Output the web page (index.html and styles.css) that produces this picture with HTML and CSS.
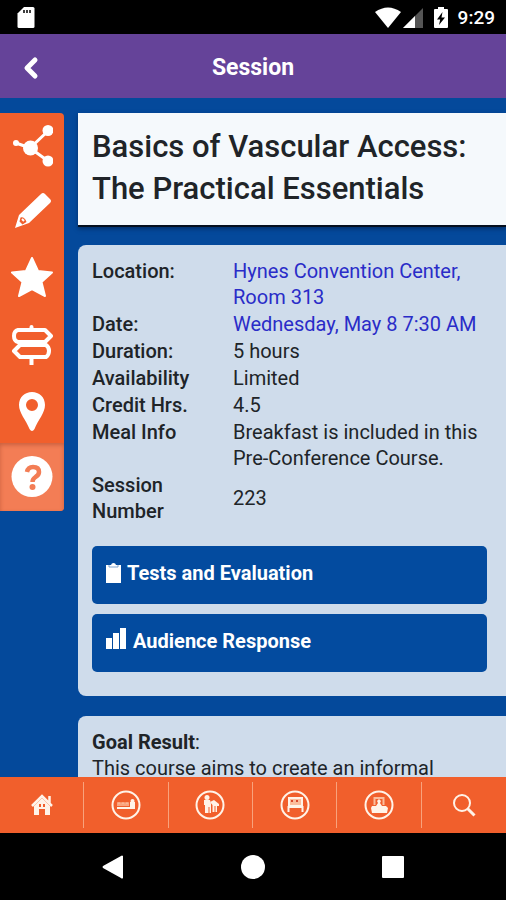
FILE: index.html
```html
<!DOCTYPE html>
<html lang="en">
<head>
<meta charset="utf-8">
<meta name="viewport" content="width=device-width, initial-scale=1">
<title>Session</title>
<link rel="stylesheet" href="styles.css">
</head>
<body>
<div class="status">
  <svg class="sd" viewBox="0 0 18 22" width="18" height="22"><path fill="#fff" d="M7 0h9q1.500 0 1.500 1.500v18q0 1.500-1.500 1.500H2q-1.500 0-1.500-1.500V6.500z"/><path d="M7 3v3M10 3v3M13 3v3" stroke="#000" stroke-width="1.500"/></svg>
  <svg viewBox="0 0 26 22" width="26" height="22"><path fill="#fff" d="M0 5Q13-4 26 5L13 21z"/></svg>
  <svg class="signal" viewBox="0 0 22 22" width="22" height="22"><path fill="#555" d="M21 1v20H1z"/><path fill="#fff" d="M13 9v12H1z"/></svg>
  <svg class="battery" viewBox="0 0 14 22" width="14" height="22"><path fill="#fff" d="M4 0h6v2h3q1 0 1 1v17q0 1-1 1H1q-1 0-1-1V3q0-1 1-1h3z"/><path d="M8.500 5L3 12.500h3.200L5 18l6-7.500H7.500z"/></svg>
  <span>9:29</span>
</div>
<header class="header">
  <button class="back" aria-label="Back"><svg viewBox="0 0 18 26" width="18" height="26"><path d="M13 5L5 13l8 8" fill="none" stroke="#fff" stroke-width="5" stroke-linecap="round" stroke-linejoin="round"/></svg></button>
  <h1>Session</h1>
</header>
<div class="body">
  <nav class="side" aria-label="Session actions">
    <button aria-label="Share"><svg viewBox="0 0 42 42" width="42" height="42" fill="#fff" stroke="#fff"><path d="M5 18l14 5L37 6M19 23l18 13" fill="none" stroke-width="3"/><g stroke="none"><circle cx="5" cy="18" r="3"/><circle cx="19.500" cy="23" r="7.500"/><circle cx="37" cy="5.500" r="5.500"/><circle cx="37" cy="36" r="5.500"/></g></svg></button>
    <button aria-label="Edit"><svg viewBox="0 0 42 42" width="42" height="42"><path fill="#fff" d="M30 3q2-2 4 0l5 5q2 2 0 4L18 32 4 37 8 24z"/><path d="M9.500 26.500q4-1 6 4.500l-4 2.500-3-3z" fill="#f15f2c"/><path d="M11 28l2 2" stroke="#fff" stroke-width="2"/></svg></button>
    <button aria-label="Favorite"><svg viewBox="0 0 42 42" width="42" height="42"><path fill="#fff" stroke="#fff" stroke-width="2" stroke-linejoin="round" d="M21 1l6 13 14 1.500-10.500 9.500 3.500 14-13-7-13 7 3.500-14L1 15.500 15 14z"/></svg></button>
    <button aria-label="Directions"><svg viewBox="0 0 42 42" width="42" height="42" fill="none" stroke="#fff" stroke-width="4" stroke-linejoin="round" stroke-linecap="round"><path d="M20.500 4v2M20.500 35v8M7 7h27l6 6-6 6H7q-4-1-4-6t4-6zM9 22h26q3 2 3 6t-3 6H9l-6-6z"/></svg></button>
    <button aria-label="Map"><svg viewBox="0 0 42 42" width="42" height="42"><path fill="#fff" fill-rule="evenodd" d="M21 3c-7 0-13 5-13 13 0 8 7 15 10.500 24q2.500 4 5 0C27 31 34 24 34 16 34 8 28 3 21 3zm0 7a6 6 0 1 1 0 12 6 6 0 0 1 0-12z"/></svg></button>
    <button class="active" aria-label="Help"><svg viewBox="0 0 42 42" width="42" height="42"><circle cx="21" cy="20.500" r="20.500" fill="#fff"/><path d="M16 16q1-5 6-5 6 0 6 5 0 3-3.500 5-3 2-3 5" fill="none" stroke="#f37d55" stroke-width="4.500"/><circle cx="21.500" cy="31" r="3" fill="#f37d55"/></svg></button>
  </nav>
  <main class="content">
    <h2>Basics of Vascular Access: The Practical Essentials</h2>
    <section class="card">
      <table>
        <tr><th scope="row">Location:</th><td><a href="#location">Hynes Convention Center, Room 313</a></td></tr>
        <tr><th scope="row">Date:</th><td><a href="#date">Wednesday, May 8 7:30 AM</a></td></tr>
        <tr><th scope="row">Duration:</th><td>5 hours</td></tr>
        <tr><th scope="row">Availability</th><td>Limited</td></tr>
        <tr><th scope="row">Credit Hrs.</th><td>4.5</td></tr>
        <tr><th scope="row">Meal Info</th><td>Breakfast is included in this Pre-Conference Course.</td></tr>
        <tr><th scope="row">Session Number</th><td class="middle">223</td></tr>
      </table>
      <div class="actions">
        <button><svg viewBox="0 0 15 20" width="15" height="20"><path fill="#fff" d="M0 2h15v18H0zM5 2q.5-2 2.500-2T10 2z"/><path d="M3 2v2h9V2" fill="none" stroke="#7ea3cf"/></svg>Tests and Evaluation</button>
        <button><svg class="chart" viewBox="0 0 21 21" width="21" height="21"><path fill="#fff" d="M0 10h6v11H0zM7 5h6v16H7zM14 0h6v21h-6z"/></svg>Audience Response</button>
      </div>
    </section>
    <section class="card">
      <p><b>Goal Result</b>:</p>
      <p>This course aims to create an informal</p>
    </section>
  </main>
</div>
<nav class="tabs" aria-label="Main">
  <a href="#home" aria-label="Home"><svg viewBox="0 0 30 30" width="30" height="30"><path d="M5 16L15 6l10 10M22.500 6v7" fill="none" stroke="#fff3e8" stroke-width="2.500"/><path fill="#fff3e8" fill-rule="evenodd" d="M7 16l8-8 8 8v9h-5v-6h-6v6H7zm5-2v3h2v-3zm4 0v3h2v-3z"/></svg></a>
  <a href="#speakers" aria-label="Speakers"><svg viewBox="0 0 30 30" width="30" height="30"><circle cx="15" cy="15" r="13.500" class="ring"/><path fill="#fff3e8" d="M6 17h18v2H6zM19 12h5v5h-5z"/><circle cx="21.500" cy="11" r="2" fill="#fff3e8"/><path d="M7 16v-3h2v3m2 0v-3h2v3m2 0v-3h2v3" fill="none" stroke="#fbbd9c" stroke-width="1.500"/></svg></a>
  <a href="#sessions" aria-label="Sessions"><svg viewBox="0 0 30 30" width="30" height="30"><circle cx="15" cy="15" r="13.500" class="ring"/><g fill="#fff3e8"><circle cx="12" cy="7.500" r="2.500"/><path d="M9 10h6l1 4v9h-1.500v-6h-1v6H10v-8H9z"/><path d="M15 12l4-2 5 4v2h-2v6h-1.500v-6h-1v6h-2v-7z"/></g></svg></a>
  <a href="#exhibits" aria-label="Exhibits"><svg viewBox="0 0 30 30" width="30" height="30"><circle cx="15" cy="15" r="13.500" class="ring"/><path d="M9 8h13v7H9z" fill="#fbbd9c"/><path d="M9 8h13v8H9zM8.500 22v-5h14v5" fill="none" stroke="#fff3e8" stroke-width="2"/><path d="M11 10h2v2h-2zm5 0h2v2h-2z" fill="#d9472b"/></svg></a>
  <a href="#posters" aria-label="Posters"><svg viewBox="0 0 30 30" width="30" height="30"><circle cx="15" cy="15" r="13.500" class="ring"/><path d="M10.500 15V8h9v7" fill="none" stroke="#fbbd9c" stroke-width="2"/><path fill="#fff3e8" d="M8 16h14l2 2-1 5H8l-1-5zM13 11l2-2 2 2-1 2 2 3h-6l2-3z"/></svg></a>
  <a href="#search" aria-label="Search"><svg viewBox="0 0 30 30" width="30" height="30" fill="none" stroke="#fff3e8"><circle cx="13" cy="13" r="8" stroke-width="2"/><path d="M18.500 18.500l7 7" stroke-width="3"/></svg></a>
</nav>
<nav class="system" aria-label="System">
  <button aria-label="Back"><svg viewBox="0 0 24 24" width="24" height="24"><path fill="#fff" d="M22 1v22q-1 1-2 0L2 13q-1-1 0-2L20 1q1-1 2 0z"/></svg></button>
  <button aria-label="Home"><svg viewBox="0 0 24 24" width="24" height="24"><circle cx="12" cy="12" r="12" fill="#fff"/></svg></button>
  <button aria-label="Recents"><svg viewBox="0 0 24 24" width="24" height="24"><rect x="1" y="1" width="22" height="22" rx="1" fill="#fff"/></svg></button>
</nav>
</body>
</html>
```
FILE: styles.css
```css
* { box-sizing: border-box; }
body {
  margin: 0;
  height: 100vh;
  display: flex;
  flex-direction: column;
  overflow: hidden;
  background: #000;
  color: #202428;
  font-family: Roboto, "Liberation Sans", sans-serif;
  font-size: 20px;
  line-height: 26px;
}
button {
  border: 0;
  padding: 0;
  background: none;
  color: #fff;
  font: inherit;
}
svg { display: block; flex: none; }
h1, h2, p { margin: 0; }
.status {
  flex: none;
  height: 34px;
  padding: 2px 11px 0 17px;
  display: flex;
  align-items: center;
  color: #fff;
  font-size: 19px;
  font-weight: 500;
}
.sd { margin-right: auto; }
.signal { margin-left: 1px; }
.battery { margin: 0 10px 0 10px; }
.header {
  flex: none;
  height: 64px;
  padding-top: 3px;
  display: grid;
  grid-template-columns: 60px 1fr 60px;
  align-items: center;
  background: #654399;
  color: #fff;
}
.header h1 {
  font-size: 23px;
  font-weight: 700;
  text-align: center;
}
.back { padding-left: 22px; }
.body {
  flex: 1;
  min-height: 0;
  display: flex;
  align-items: flex-start;
  gap: 14px;
  padding-top: 15px;
  overflow: hidden;
  background: #04499b;
}
.side {
  flex: none;
  width: 64px;
  display: flex;
  flex-direction: column;
  overflow: hidden;
  border-radius: 0 4px 4px 0;
  background: #f15f2c;
}
.side button {
  height: 66px;
  display: flex;
  align-items: center;
  justify-content: center;
}
.side .active {
  height: 68px;
  background: #f37d55;
  box-shadow: inset 0 2px 4px #c9603f;
}
.content { flex: 1; min-width: 0; }
h2 {
  padding: 13px 14px 15px;
  background: #f5f9fc;
  border-bottom: 2px solid #05101f;
  box-shadow: 0 2px 4px #03306a;
  font-size: 31px;
  line-height: 42px;
  font-weight: 500;
}
.card {
  margin-top: 18px;
  padding: 13px 19px 24px 14px;
  border-radius: 8px 0 0 8px;
  background: #cfdceb;
}
.card + .card { margin-top: 20px; }
table { width: 100%; border-collapse: collapse; }
th {
  width: 141px;
  padding: 0 40px 1px 0;
  text-align: left;
  font-weight: 500;
  vertical-align: top;
}
td { padding: 0 0 1px; vertical-align: top; }
.middle { vertical-align: middle; }
td a { color: #2a2cc8; text-decoration: none; }
.actions {
  margin-top: 21px;
  display: grid;
  gap: 10px;
}
.actions button {
  height: 58px;
  padding: 0 14px 4px;
  display: flex;
  align-items: center;
  gap: 6px;
  border-radius: 5px;
  background: #034b9f;
  font-weight: 700;
}
.chart { margin-bottom: 6px; }
.tabs {
  flex: none;
  height: 56px;
  display: grid;
  grid-template-columns: repeat(6, 1fr);
  align-items: center;
  background: #f15f2c;
}
.tabs a {
  height: 46px;
  display: flex;
  align-items: center;
  justify-content: center;
  border-right: 1px solid #f8a27c;
}
.tabs a:last-child { border-right: 0; }
.ring { fill: none; stroke: #fff3e8; stroke-width: 2; }
.system {
  flex: none;
  height: 67px;
  padding: 0 43px;
  display: grid;
  grid-template-columns: repeat(3, 1fr);
}
.system button {
  display: flex;
  align-items: center;
  justify-content: center;
}
```
